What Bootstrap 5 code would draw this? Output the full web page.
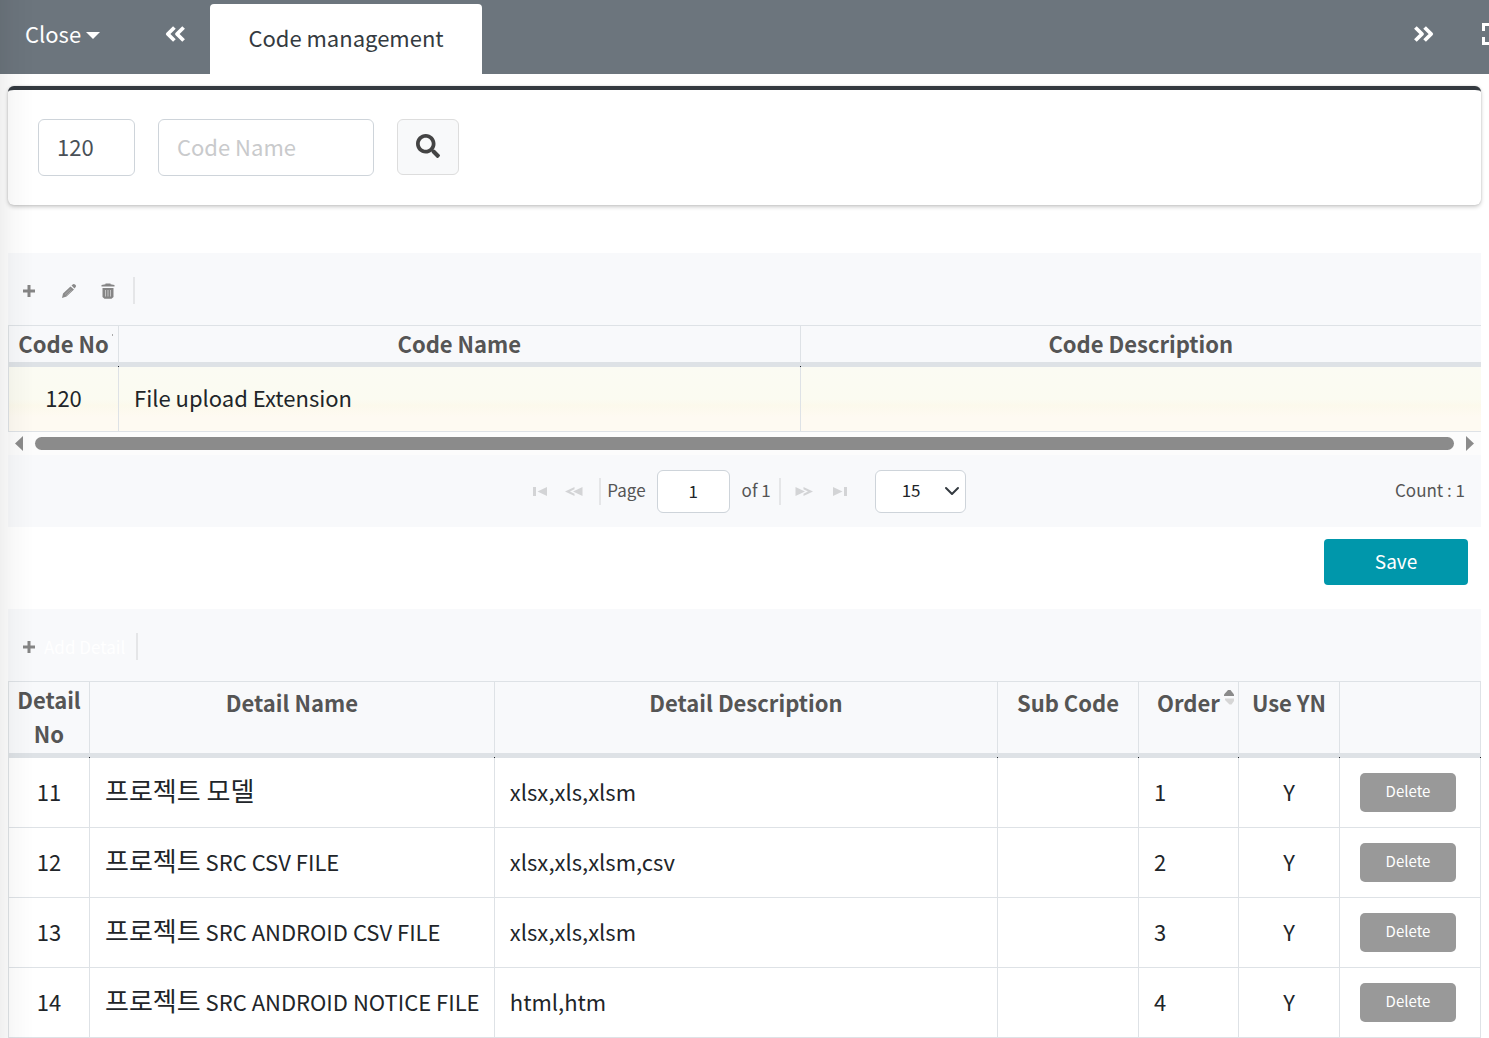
<!DOCTYPE html>
<html lang="en">
<head>
<meta charset="utf-8">
<meta name="viewport" content="width=device-width, initial-scale=1">
<title>Code management</title>
<link href="https://cdn.jsdelivr.net/npm/bootstrap@5.3.0/dist/css/bootstrap.min.css" rel="stylesheet">
<style>
  body { font-family: "Noto Sans CJK KR", "Noto Sans", sans-serif; font-size: 22px; line-height: 36px; color: #212529; background: #fff; overflow-x: hidden; }
  svg { display: block; flex: none; }
  .side-shade { position: fixed; inset: 0 auto 0 0; width: 34px; pointer-events: none; z-index: 10; background: linear-gradient(90deg, rgba(0,0,0,.06), rgba(0,0,0,.025) 40%, rgba(0,0,0,0)); }

  .topbar { height: 74px; background: #6c757d; overflow: hidden; }
  .topbar .btn { color: #fff; font-size: 22px; line-height: 36px; border: 0; border-radius: 0; padding: 0; }
  .close-menu { margin: 15px 0 0 25px; width: 75px; text-align: left; white-space: nowrap; }
  .close-menu::after { vertical-align: 4px; margin-left: 5px; border-width: 7px 7px 0; }
  .scroll-left { margin: 26px 0 0 65px; }
  .scroll-right { margin: 26px 0 0 auto; }
  .full-btn { margin: 23px -15px 0 48px; }
  .page-tab { margin: 4px 0 0 25px; width: 272px; height: 70px; background: #fff; border-radius: 4px 4px 0 0; color: #343a40; text-align: center; line-height: 66px; text-decoration: none; }

  .search-card { margin-top: 12px; gap: 23px; border: 0; border-top: 4px solid #343a40; border-radius: 6px; box-shadow: 0 0 2px rgba(0,0,0,.15), 0 2px 4px rgba(0,0,0,.2); padding: 29px 30px; height: 119px; }
  .search-card .form-control { height: 57px; font-size: 22px; padding: 0 18px 4px; border-color: #ced4da; border-radius: 6px; color: #495057; }
  .search-card .form-control::placeholder { color: #c9cacc; }
  .code-no { width: 97px; }
  .code-name { width: 216px; }
  .find-btn { width: 62px; height: 56px; background: #f8f9fa; border: 1px solid #ddd; border-radius: 6px; color: #444; padding: 0 0 2px; }

  .code-section { margin-top: 48px; }
  .grid-bar { background: #f8f9fb; height: 72px; padding: 3px 14px 0; }
  .grid-bar .btn { border: 0; padding: 0; font-size: 17px; color: #fff; line-height: 30px; }
  .grid-bar .edit-btn { margin-left: 25px; }
  .grid-bar .trash-btn { margin: 0 18px 0 24px; }
  .grid-bar .add-detail { gap: 8px; margin-right: 11px; }
  .bar-rule { width: 2px; height: 27px; background: #e5e6e8; }

  .data-grid { width: 100%; table-layout: fixed; border-collapse: separate; border-spacing: 0; border-left: 1px solid #dee2e6; border-top: 1px solid #dee2e6; }
  .data-grid th { background: #f8f9fb; color: #555; font-weight: 700; text-align: center; vertical-align: top; padding: 0 8px; line-height: 34px; border-right: 1px solid #dee2e6; border-bottom: 5px solid #dee2e6; position: relative; }
  .data-grid td { height: 70px; padding: 0 15px 4px; border-right: 1px solid #dee2e6; border-bottom: 1px solid #dee2e6; white-space: nowrap; overflow: hidden; }
  .data-grid th::after { content: ""; position: absolute; right: -1px; bottom: -5px; width: 1px; height: 1px; background: #212529; }
  .code-grid th { padding-bottom: 2px; }
  .code-grid tbody td { height: 65px; background: linear-gradient(#fbfbf3 0, #fbfbf1 50%, #fcf9ec 60%, #fefaf2 78%, #fefaf2 100%); }
  .code-grid th:last-child, .code-grid td:last-child { border-right: 0; }
  .code-grid th:last-child::after { display: none; }
  .detail-grid th { padding-top: 3px; height: 76px; }
  .detail-grid th.two-line { padding: 0; }
  .w-codeno { width: 110px; }
  .w-codename { width: 46.3%; }
  .w-no { width: 81px; }
  .w-name { width: 27.5%; }
  .w-order { width: 100px; }
  .w-use { width: 101px; }
  .w-action { width: 141px; }
  .ko { font-size: 26px; }
  .sort-mark { position: absolute; right: 4px; top: 7px; }

  .hscroll { background: #fcfcfc; height: 23px; padding: 0 7px; }
  .hscroll-thumb { height: 13px; border-radius: 7px; background: #8b8b8b; margin: 0 12px; }

  .pager { background: #f8f9fb; height: 72px; font-size: 17px; color: #555; }
  .pager .form-control, .pager .form-select { height: 43px; font-size: 17px; border-color: #ced4da; border-radius: 6px; color: #212529; padding: 0 0 2px; }
  .pager .form-control { width: 73px; text-align: center; margin: 0 12px 0 11px; }
  .pager .form-select { width: 91px; padding-left: 26px; margin-left: 28px; background-position: right 4px center; background-size: 18px 16px; }
  .pager .btn { border: 0; padding: 0; color: #d3d4d6; }
  .pager .prev-btn { margin: 0 16px 0 18px; }
  .pager .next-btn { margin: 0 20px 0 14px; }
  .pager-side { flex: 1 1 0; }
  .pager-mid { margin-left: 10px; }
  .pager-text { padding-bottom: 3px; }
  .page-label { margin-left: 6px; }
  .after-rule { margin-left: 8px; }

  .save-btn { width: 144px; height: 46px; background: #0097ab; color: #fff; font-size: 19px; line-height: 44px; padding: 0 0 2px; border: 0; border-radius: 4px; margin: 12px 13px 24px 0; }
  .data-grid td.del-cell { padding-bottom: 0; }
  .del-btn { width: 96px; height: 39px; background: #999; color: #fff; font-size: 15px; line-height: 36px; padding: 0 0 3px; border: 0; border-radius: 5px; display: block; margin-left: 5px; }
</style>
<script src="https://cdn.jsdelivr.net/npm/bootstrap@5.3.0/dist/js/bootstrap.bundle.min.js"></script>
</head>
<body>
<div class="side-shade"></div>
<nav class="topbar d-flex align-items-start">
  <button class="btn close-menu dropdown-toggle" type="button">Close</button>
  <button class="btn scroll-left" type="button" aria-label="Scroll tabs left">
    <svg width="20" height="16" viewBox="0 0 20 16" fill="none" stroke="#fff" stroke-width="3.8" stroke-linejoin="round"><path d="M9.400 1.500 2.800 8l6.600 6.500M18.600 1.500 12 8l6.600 6.500"/></svg>
  </button>
  <a class="page-tab" href="#">Code management</a>
  <button class="btn scroll-right" type="button" aria-label="Scroll tabs right">
    <svg width="20" height="16" viewBox="0 0 20 16" fill="none" stroke="#fff" stroke-width="3.8" stroke-linejoin="round"><path d="M1.400 1.500 8 8l-6.600 6.500M10.600 1.500 17.200 8l-6.600 6.500"/></svg>
  </button>
  <button class="btn full-btn" type="button" aria-label="Full screen">
    <svg width="22" height="22" viewBox="0 0 22 22" fill="none" stroke="#fff" stroke-width="3"><path d="M1.500 8V1.500H8M14 1.500h6.500V8M20.500 14v6.500H14M8 20.500H1.500V14"/></svg>
  </button>
</nav>

<main class="px-2">
  <form class="card search-card d-flex flex-row align-items-start">
    <input class="form-control code-no" type="text" value="120" aria-label="Code No">
    <input class="form-control code-name" type="text" placeholder="Code Name" aria-label="Code Name">
    <button class="btn find-btn d-flex align-items-center justify-content-center" type="button" aria-label="Search">
      <svg width="24" height="24" viewBox="0 0 512 512" fill="currentColor"><path d="M505 442.700 405.300 343c-4.500-4.500-10.600-7-17-7H372c27.600-35.300 44-79.700 44-128C416 93.100 322.900 0 208 0S0 93.100 0 208s93.100 208 208 208c48.300 0 92.700-16.400 128-44v16.300c0 6.400 2.500 12.500 7 17l99.700 99.700c9.400 9.400 24.600 9.400 33.900 0l28.300-28.300c9.400-9.400 9.400-24.600.1-34zM208 336c-70.700 0-128-57.200-128-128 0-70.700 57.200-128 128-128 70.700 0 128 57.200 128 128 0 70.700-57.200 128-128 128z"/></svg>
    </button>
  </form>

  <section class="code-section">
    <div class="grid-bar d-flex align-items-center">
      <button class="btn" type="button" aria-label="Add"><svg width="14" height="14" viewBox="0 0 14 14" fill="#858585"><path d="M5.500 1h3v4.500H13v3H8.500V13h-3V8.500H1v-3h4.500z"/></svg></button>
      <button class="btn edit-btn" type="button" aria-label="Edit"><svg width="16" height="16" viewBox="0 0 16 16" fill="#8a8a8a"><path d="M1 15l1-4.500 7.500-7L13 6.500 5.500 13.500zM10.500 2.600 12 1.200q1-.7 2 .2l.8.800q.6 1-.1 1.800L13.500 5.400z"/><path d="M4 11.500l5.500-5.300M5.300 12.600l5.400-5.200" stroke="#b5b5b5" stroke-width=".7"/></svg></button>
      <button class="btn trash-btn" type="button" aria-label="Delete"><svg width="14" height="16" viewBox="0 0 14 16" fill="#858585"><path d="M4.500 1.200V.5h5v.7L13.500 2v1.500H.5V2zM1.500 5h11v9l-2 1.700h-7L1.500 14z"/><path d="M4.500 7v6.500M7 7v6.500M9.500 7v6.500" stroke="#c4c4c4" stroke-width="1"/></svg></button>
      <div class="bar-rule"></div>
    </div>
    <table class="data-grid code-grid">
      <colgroup><col class="w-codeno"><col class="w-codename"><col></colgroup>
      <thead><tr>
        <th class="px-0">Code No<svg class="sort-mark" width="3" height="4" viewBox="0 0 3 4" fill="#aaa"><path d="M1 1h1v2H1z"/></svg></th>
        <th>Code Name</th><th>Code Description</th>
      </tr></thead>
      <tbody><tr><td class="text-center">120</td><td>File upload Extension</td><td></td></tr></tbody>
    </table>
    <div class="hscroll d-flex align-items-center">
      <svg width="8" height="15" viewBox="0 0 8 15" fill="#8b8b8b"><path d="M8 0v15L0 7.500z"/></svg>
      <div class="hscroll-thumb flex-fill"></div>
      <svg width="8" height="15" viewBox="0 0 8 15" fill="#8b8b8b"><path d="M0 0v15l8-7.500z"/></svg>
    </div>
    <div class="pager d-flex align-items-center">
      <div class="pager-side"></div>
      <div class="pager-mid d-flex align-items-center">
        <button class="btn" type="button" aria-label="First page"><svg width="14" height="9" viewBox="0 0 14 9" fill="currentColor"><path d="M0 0h3v9H0zM14 0v9L4.500 4.500z"/></svg></button>
        <button class="btn prev-btn" type="button" aria-label="Previous page"><svg width="18" height="9" viewBox="0 0 18 9" fill="currentColor"><path d="M17.500 0v9L8 4.500zM9.500 0v2.200L5 4.500l4.500 2.300V9L0 4.500z"/></svg></button>
        <div class="bar-rule"></div>
        <label class="page-label pager-text" for="pageNo">Page</label>
        <input class="form-control" id="pageNo" type="text" value="1">
        <span class="pager-text">of 1</span>
        <div class="bar-rule after-rule"></div>
        <button class="btn next-btn" type="button" aria-label="Next page"><svg width="18" height="9" viewBox="0 0 18 9" fill="currentColor"><path d="M.5 0v9L10 4.500zM8.500 0v2.200L13 4.500 8.500 6.800V9L18 4.500z"/></svg></button>
        <button class="btn last-btn" type="button" aria-label="Last page"><svg width="14" height="9" viewBox="0 0 14 9" fill="currentColor"><path d="M11 0h3v9h-3zM0 0v9l9.500-4.500z"/></svg></button>
        <select class="form-select" aria-label="Rows per page"><option>15</option><option>30</option></select>
      </div>
      <div class="pager-side text-end"><span class="d-block me-3 pager-text">Count : 1</span></div>
    </div>
  </section>

  <div class="d-flex justify-content-end"><button class="btn save-btn" type="button">Save</button></div>

  <section>
    <div class="grid-bar d-flex align-items-center">
      <button class="btn d-flex align-items-center add-detail" type="button"><svg width="14" height="14" viewBox="0 0 14 14" fill="#858585"><path d="M5.500 1h3v4.500H13v3H8.500V13h-3V8.500H1v-3h4.500z"/></svg><span>Add Detail</span></button>
      <div class="bar-rule"></div>
    </div>
    <table class="data-grid detail-grid">
      <colgroup><col class="w-no"><col class="w-name"><col><col class="w-action"><col class="w-order"><col class="w-use"><col class="w-action"></colgroup>
      <thead><tr>
        <th class="two-line">Detail No</th><th>Detail Name</th><th>Detail Description</th><th>Sub Code</th>
        <th>Order<svg class="sort-mark" width="10" height="16" viewBox="0 0 10 16"><path d="M0 7V5.500L4 1h2.500L10 5.500V7z" fill="#8a8a8a"/><path d="M1 9.500h9v2.500l-2.500 3.500h-2L1 11z" fill="#d6d6d6"/></svg></th>
        <th>Use YN</th><th aria-label="Action"></th>
      </tr></thead>
      <tbody>
        <tr><td class="text-center">11</td><td><span class="ko">프로젝트 모델</span></td><td>xlsx,xls,xlsm</td><td></td><td>1</td><td class="text-center">Y</td><td class="del-cell"><button class="btn del-btn" type="button">Delete</button></td></tr>
        <tr><td class="text-center">12</td><td><span class="ko">프로젝트</span> SRC CSV FILE</td><td>xlsx,xls,xlsm,csv</td><td></td><td>2</td><td class="text-center">Y</td><td class="del-cell"><button class="btn del-btn" type="button">Delete</button></td></tr>
        <tr><td class="text-center">13</td><td><span class="ko">프로젝트</span> SRC ANDROID CSV FILE</td><td>xlsx,xls,xlsm</td><td></td><td>3</td><td class="text-center">Y</td><td class="del-cell"><button class="btn del-btn" type="button">Delete</button></td></tr>
        <tr><td class="text-center">14</td><td><span class="ko">프로젝트</span> SRC ANDROID NOTICE FILE</td><td>html,htm</td><td></td><td>4</td><td class="text-center">Y</td><td class="del-cell"><button class="btn del-btn" type="button">Delete</button></td></tr>
      </tbody>
    </table>
  </section>
</main>
</body>
</html>
